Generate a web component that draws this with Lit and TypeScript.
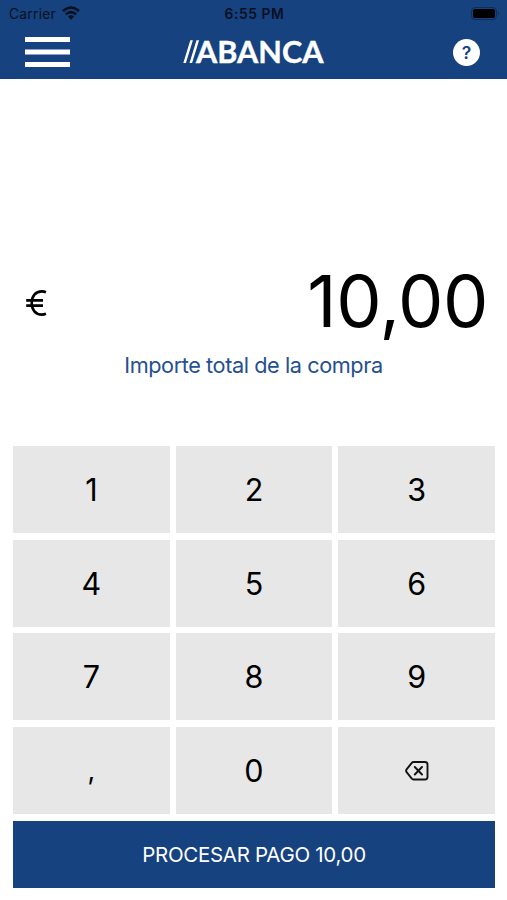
import { LitElement, html, css } from "lit";
import { customElement } from "lit/decorators.js";

@customElement("app-root")
export class AppRoot extends LitElement {
  static styles = css`
    :host { display: flex; flex-direction: column; height: 900px; background: #fff; font-family: Inter, "Liberation Sans", sans-serif; color: #000; overflow: hidden; }
    * { box-sizing: border-box; }
    .top { height: 79px; background: #16427f; flex: none; }
    .status { height: 27px; display: grid; grid-template-columns: 1fr auto 1fr; align-items: center; font-size: 13.8px; padding: 0 7px 0 9px; color: #07101f; }
    .carrier { display: flex; align-items: center; gap: 6px; letter-spacing: 0.25px; }
    .carrier svg { margin-top: -2px; }
    .time { font-weight: 600; letter-spacing: 0.6px; }
    .battery { justify-self: end; display: block; }
    .nav { height: 50px; display: grid; grid-template-columns: 1fr auto 1fr; align-items: center; padding: 0 27px 0 25px; }
    .nav svg { display: block; }
    .brand { overflow: visible; }
    .wordmark { font: 700 30.5px Lato, sans-serif; }
    .help { justify-self: end; }
    .mark { font: 600 17.5px Inter, sans-serif; }
    .amount { margin-top: 181px; height: 84px; flex: none; display: flex; align-items: center; justify-content: space-between; padding: 0 19px 0 25px; }
    .euro { display: block; margin-top: 2px; }
    .value { font-size: 72px; line-height: 84px; letter-spacing: -0.4px; padding-bottom: 3px; }
    .caption { height: 42px; line-height: 42px; text-align: center; color: #24508f; font-size: 21.7px; letter-spacing: -0.42px; flex: none; }
    .pad { margin: 60px 12px 0 13px; display: grid; grid-template-columns: repeat(3, 1fr); grid-auto-rows: 87px; gap: 6.7px 6px; }
    .key { background: #e7e7e7; display: flex; align-items: center; justify-content: center; font-size: 30.5px; }
    .comma { font-size: 27px; }
    .pay { margin: 7px 12px 0 13px; height: 67px; background: #16427f; color: #fff; display: flex; align-items: center; justify-content: center; font-size: 20.5px; letter-spacing: -0.3px; }
  `;

  render() {
    return html`
      <div class="top">
        <div class="status">
          <span class="carrier">Carrier
            <svg width="18" height="14" viewBox="0 0 18 14"><path d="M1 5.200Q9-2.200 17 5.200M3.800 8.400Q9 3.800 14.200 8.400" fill="none" stroke="currentColor" stroke-width="2.500"/><path d="M6 10.600Q9 8 12 10.600L9 13.700Z" fill="currentColor"/></svg>
          </span>
          <span class="time">6:55 PM</span>
          <svg class="battery" width="29" height="13" viewBox="0 0 29 13"><rect x=".5" y=".5" width="25" height="12" rx="3.500" fill="none" stroke="#07101f" stroke-opacity=".4"/><rect x="2" y="2" width="22" height="9" rx="2" fill="#000"/><path d="M27 4.500Q29 6.500 27 8.500Z" fill="#07101f" fill-opacity=".45"/></svg>
        </div>
        <div class="nav">
          <svg width="45" height="30" viewBox="0 0 45 30"><path d="M0 2.500H45M0 15H45M0 27.500H45" stroke="#fff" stroke-width="5"/></svg>
          <svg class="brand" width="140" height="28" viewBox="0 0 140 28" role="img" aria-label="ABANCA">
            <path d="M.3 25L7.300 2.300H9.900L2.900 25ZM6.500 25L13.500 2.300H16.100L9.100 25Z" fill="#fff"/>
            <text class="wordmark" x="13" y="24.700" textLength="127.500" lengthAdjust="spacingAndGlyphs" fill="#fff" stroke="#fff" stroke-width=".4">ABANCA</text>
          </svg>
          <svg class="help" width="27" height="27" viewBox="0 0 27 27"><circle cx="13.500" cy="13.500" r="13.500" fill="#fff"/><text class="mark" x="13.500" y="19.700" text-anchor="middle" fill="#16427f">?</text></svg>
        </div>
      </div>
      <div class="amount">
        <svg class="euro" width="24" height="28" viewBox="0 0 24 28" role="img" aria-label="€"><path d="M21 3.200Q19 2.400 16.800 2.400C10.500 2.400 6.700 7.300 6.700 14S10.500 25.600 16.800 25.600Q19 25.600 21 24.800M1.200 11.400H18M1.200 16.600H18" fill="none" stroke="#000" stroke-width="2.600"/></svg>
        <span class="value">10,00</span>
      </div>
      <div class="caption">Importe total de la compra</div>
      <div class="pad">
        ${["1","2","3","4","5","6","7","8","9"].map((k) => html`<div class="key">${k}</div>`)}
        <div class="key comma">,</div>
        <div class="key">0</div>
        <div class="key"><svg width="24" height="20" viewBox="0 0 24 20" fill="none" stroke="#111" stroke-width="1.900" stroke-linejoin="round" stroke-linecap="round"><path d="M8.500 1H20Q22.500 1 22.500 3.500V16Q22.500 18.500 20 18.500H8.500Q7.500 18.500 6.800 17.700L1.600 11.200Q.6 9.750 1.600 8.300L6.800 1.800Q7.500 1 8.500 1ZM9.800 6L17 13.500M17 6L9.800 13.500"/></svg></div>
      </div>
      <div class="pay">PROCESAR PAGO 10,00</div>
    `;
  }
}
